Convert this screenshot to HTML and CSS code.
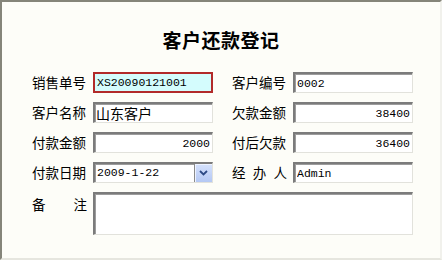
FILE: index.html
```html
<!DOCTYPE html>
<html lang="zh-CN">
<head>
    <meta charset="UTF-8">
    <title>客户还款登记</title>
    <link rel="stylesheet" href="styles.css">
</head>
<body>
    <div class="window">
        <h1 class="title">客户还款登记</h1>
        <form class="pay-form">
            <div class="row">
                <div class="field">
                    <label>销售单号</label>
                    <input class="box box-active" value="XS20090121001" readonly>
                </div>
                <div class="field">
                    <label>客户编号</label>
                    <input class="box" value="0002" readonly>
                </div>
            </div>
            <div class="row">
                <div class="field">
                    <label>客户名称</label>
                    <input class="box box-cn" value="山东客户" readonly>
                </div>
                <div class="field">
                    <label>欠款金额</label>
                    <input class="box num" value="38400" readonly>
                </div>
            </div>
            <div class="row">
                <div class="field">
                    <label>付款金额</label>
                    <input class="box num" value="2000" readonly>
                </div>
                <div class="field">
                    <label>付后欠款</label>
                    <input class="box num" value="36400" readonly>
                </div>
            </div>
            <div class="row">
                <div class="field">
                    <label>付款日期</label>
                    <div class="box combo">
                        <span class="combo-text">2009-1-22</span>
                        <span class="combo-btn">
                            <svg width="9" height="6" viewBox="0 0 9 6"><path d="M1 1 L4.5 4.5 L8 1" fill="none" stroke="#2d4a86" stroke-width="1.8"/></svg>
                        </span>
                    </div>
                </div>
                <div class="field">
                    <label class="spread"><span>经</span><span>办</span><span>人</span></label>
                    <input class="box" value="Admin" readonly>
                </div>
            </div>
            <div class="row">
                <div class="field">
                    <label class="spread top"><span>备</span><span>注</span></label>
                    <textarea class="box memo" readonly></textarea>
                </div>
            </div>
        </form>
    </div>
</body>
</html>
```

FILE: styles.css
```css
body {
    margin: 0;
    font-family: "Noto Sans CJK SC", sans-serif;
    background: #fff;
}
.window {
    width: 442px;
    height: 260px;
    box-sizing: border-box;
    background: #fdfdf8;
    border-top: 2px solid #85857a;
    border-left: 2px solid #85857a;
    border-right: 2px solid #f1f1ec;
    border-bottom: 2px solid #e6e6df;
}
.title {
    margin: 26px 0 0;
    height: 24px;
    line-height: 24px;
    text-align: center;
    font-size: 19px;
    font-weight: 700;
    color: #000;
    letter-spacing: 0.5px;
}
.pay-form {
    margin: 20px 0 0 30px;
    display: flex;
    flex-direction: column;
    gap: 9px;
}
.row {
    display: flex;
    gap: 19px;
}
.field {
    display: flex;
    align-items: flex-start;
}
.field label {
    width: 55px;
    margin-right: 6px;
    height: 21px;
    line-height: 21px;
    font-size: 13.5px;
    color: #000;
    white-space: nowrap;
}
.field label.spread {
    display: flex;
    justify-content: space-between;
}
.field label.top {
    line-height: 16px;
    height: 16px;
    margin-top: 4px;
}
.box {
    width: 120px;
    height: 21px;
    box-sizing: border-box;
    margin: 0;
    padding: 0 2px;
    background: #fff;
    border-style: solid;
    border-width: 2px 1px 1px 2px;
    border-color: #7b7b7b #e2e2dc #e2e2dc #7b7b7b;
    box-shadow: inset 1px 1px 0 #9c9c9c;
    font-family: "Liberation Mono", "Noto Sans CJK SC", monospace;
    font-size: 11.5px;
    color: #000;
    outline: none;
}
.box-active {
    background: #d4fcfd;
    border: 2px solid #b22a2a;
    box-shadow: none;
}
.box-cn {
    font-family: "Noto Sans CJK SC", sans-serif;
    font-size: 14px;
    padding-left: 1px;
}
.num {
    text-align: right;
}
.combo {
    display: flex;
    align-items: stretch;
    padding: 0;
}
.combo-text {
    flex: 1;
    line-height: 18px;
    padding-left: 2px;
}
.combo-btn {
    width: 17px;
    margin: 0 0 0 1px;
    border-left: 1px solid #8a8a8a;
    background: linear-gradient(#d6e2fc, #b4c8f4);
    box-shadow: inset 1px 1px 0 #eef3ff;
    display: flex;
    align-items: center;
    justify-content: center;
}
.memo {
    width: 320px;
    height: 43px;
    resize: none;
}
```
